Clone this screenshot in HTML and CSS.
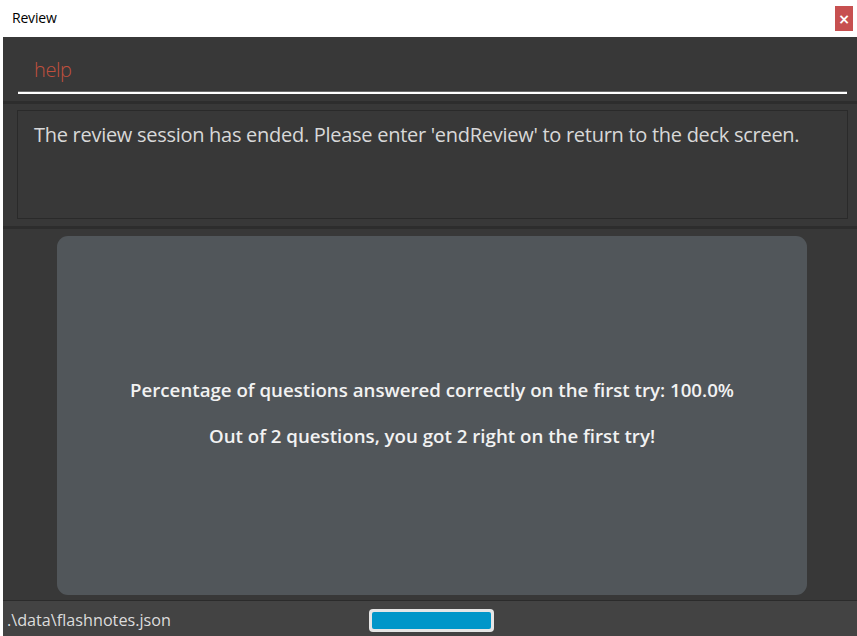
FILE: index.html
```html
<!DOCTYPE html>
<html>
<head>
<meta charset="utf-8">
<link rel="stylesheet" href="styles.css">
</head>
<body>
<div class="app">
  <div class="titlebar">
    <span class="title">Review</span>
    <span class="close">×</span>
  </div>
  <div class="window">
    <div class="command">
      <div class="input">help</div>
    </div>
    <div class="sep"></div>
    <div class="result-wrap">
      <div class="result">The review session has ended. Please enter 'endReview' to return to the deck screen.</div>
    </div>
    <div class="sep"></div>
    <div class="card-wrap">
      <div class="card">
        <p class="line">Percentage of questions answered correctly on the first try: 100.0%</p>
        <p class="line">Out of 2 questions, you got 2 right on the first try!</p>
      </div>
    </div>
    <div class="status">
      <span class="path">.\data\flashnotes.json</span>
      <div class="progress"><div class="fill"></div></div>
    </div>
  </div>
</div>
</body>
</html>
```
FILE: styles.css
```css
html, body {
  margin: 0;
  padding: 0;
  width: 857px;
  height: 636px;
  overflow: hidden;
  background: #ffffff;
}
.app {
  display: flex;
  flex-direction: column;
  height: 636px;
}
.titlebar {
  height: 37px;
  flex: none;
  display: flex;
  align-items: center;
  justify-content: space-between;
  background: #ffffff;
  box-sizing: border-box;
  padding: 0 4px 2px 12px;
}
.title {
  font-family: "Open Sans", sans-serif;
  font-size: 14px;
  color: #000;
  letter-spacing: -0.2px;
}
.close {
  width: 18px;
  height: 25px;
  margin-top: 2px;
  background: #c75050;
  color: #fff;
  font-family: "DejaVu Sans", sans-serif;
  font-size: 14px;
  font-weight: bold;
  display: flex;
  align-items: center;
  justify-content: center;
  line-height: 1;
}
.window {
  flex: 1;
  margin-left: 3px;
  background: #383838;
  display: flex;
  flex-direction: column;
  min-height: 0;
}
.command {
  height: 64px;
  flex: none;
  box-sizing: border-box;
  padding: 0 10px 0 15px;
  display: flex;
  align-items: flex-end;
}
.input {
  width: 100%;
  height: 57px;
  box-sizing: border-box;
  border-bottom: 2px solid #ffffff;
  box-shadow: 0 -1px 0 #6a6a6a inset;
  padding: 19px 0 0 16px;
  font-family: "Open Sans", sans-serif;
  font-weight: 300;
  font-size: 20px;
  color: #c0503e;
  letter-spacing: -0.4px;
  margin-bottom: 7px;
}
.sep {
  height: 3px;
  flex: none;
  background: #2d2d2d;
}
.result-wrap {
  flex: none;
  padding: 6px 9px 7px 14px;
}
.result {
  height: 109px;
  box-sizing: border-box;
  border: 1px solid #2a2a2a;
  padding: 10px 0 0 16px;
  font-family: "Open Sans", sans-serif;
  font-size: 20px;
  color: #d8d8d8;
  letter-spacing: -0.28px;
  white-space: nowrap;
}
.card-wrap {
  flex: 1;
  display: flex;
  padding: 7px 50px 5px 54px;
  min-height: 0;
}
.card {
  flex: 1;
  background: #51565a;
  border-radius: 11px;
  display: flex;
  flex-direction: column;
  align-items: center;
  justify-content: center;
  padding-bottom: 6px;
}
.line {
  margin: 0;
  font-family: "Open Sans", sans-serif;
  font-weight: 600;
  font-size: 18.7px;
  color: #f2f2f2;
  letter-spacing: 0;
  line-height: 46px;
}
.status {
  height: 35px;
  flex: none;
  background: #434343;
  border-top: 1px solid #2b2b2b;
  display: flex;
  align-items: center;
  padding-left: 4px;
}
.path {
  font-family: "Open Sans", sans-serif;
  font-size: 16.2px;
  color: #dcdcdc;
  letter-spacing: 0;
  width: 362px;
  padding-top: 2px;
}
.progress {
  width: 125px;
  height: 23px;
  box-sizing: border-box;
  background: #e6e6e6;
  border-radius: 4px;
  padding: 3px;
  margin-top: 4px;
}
.fill {
  height: 100%;
  background: #0096c9;
  border-radius: 2px;
}
```
